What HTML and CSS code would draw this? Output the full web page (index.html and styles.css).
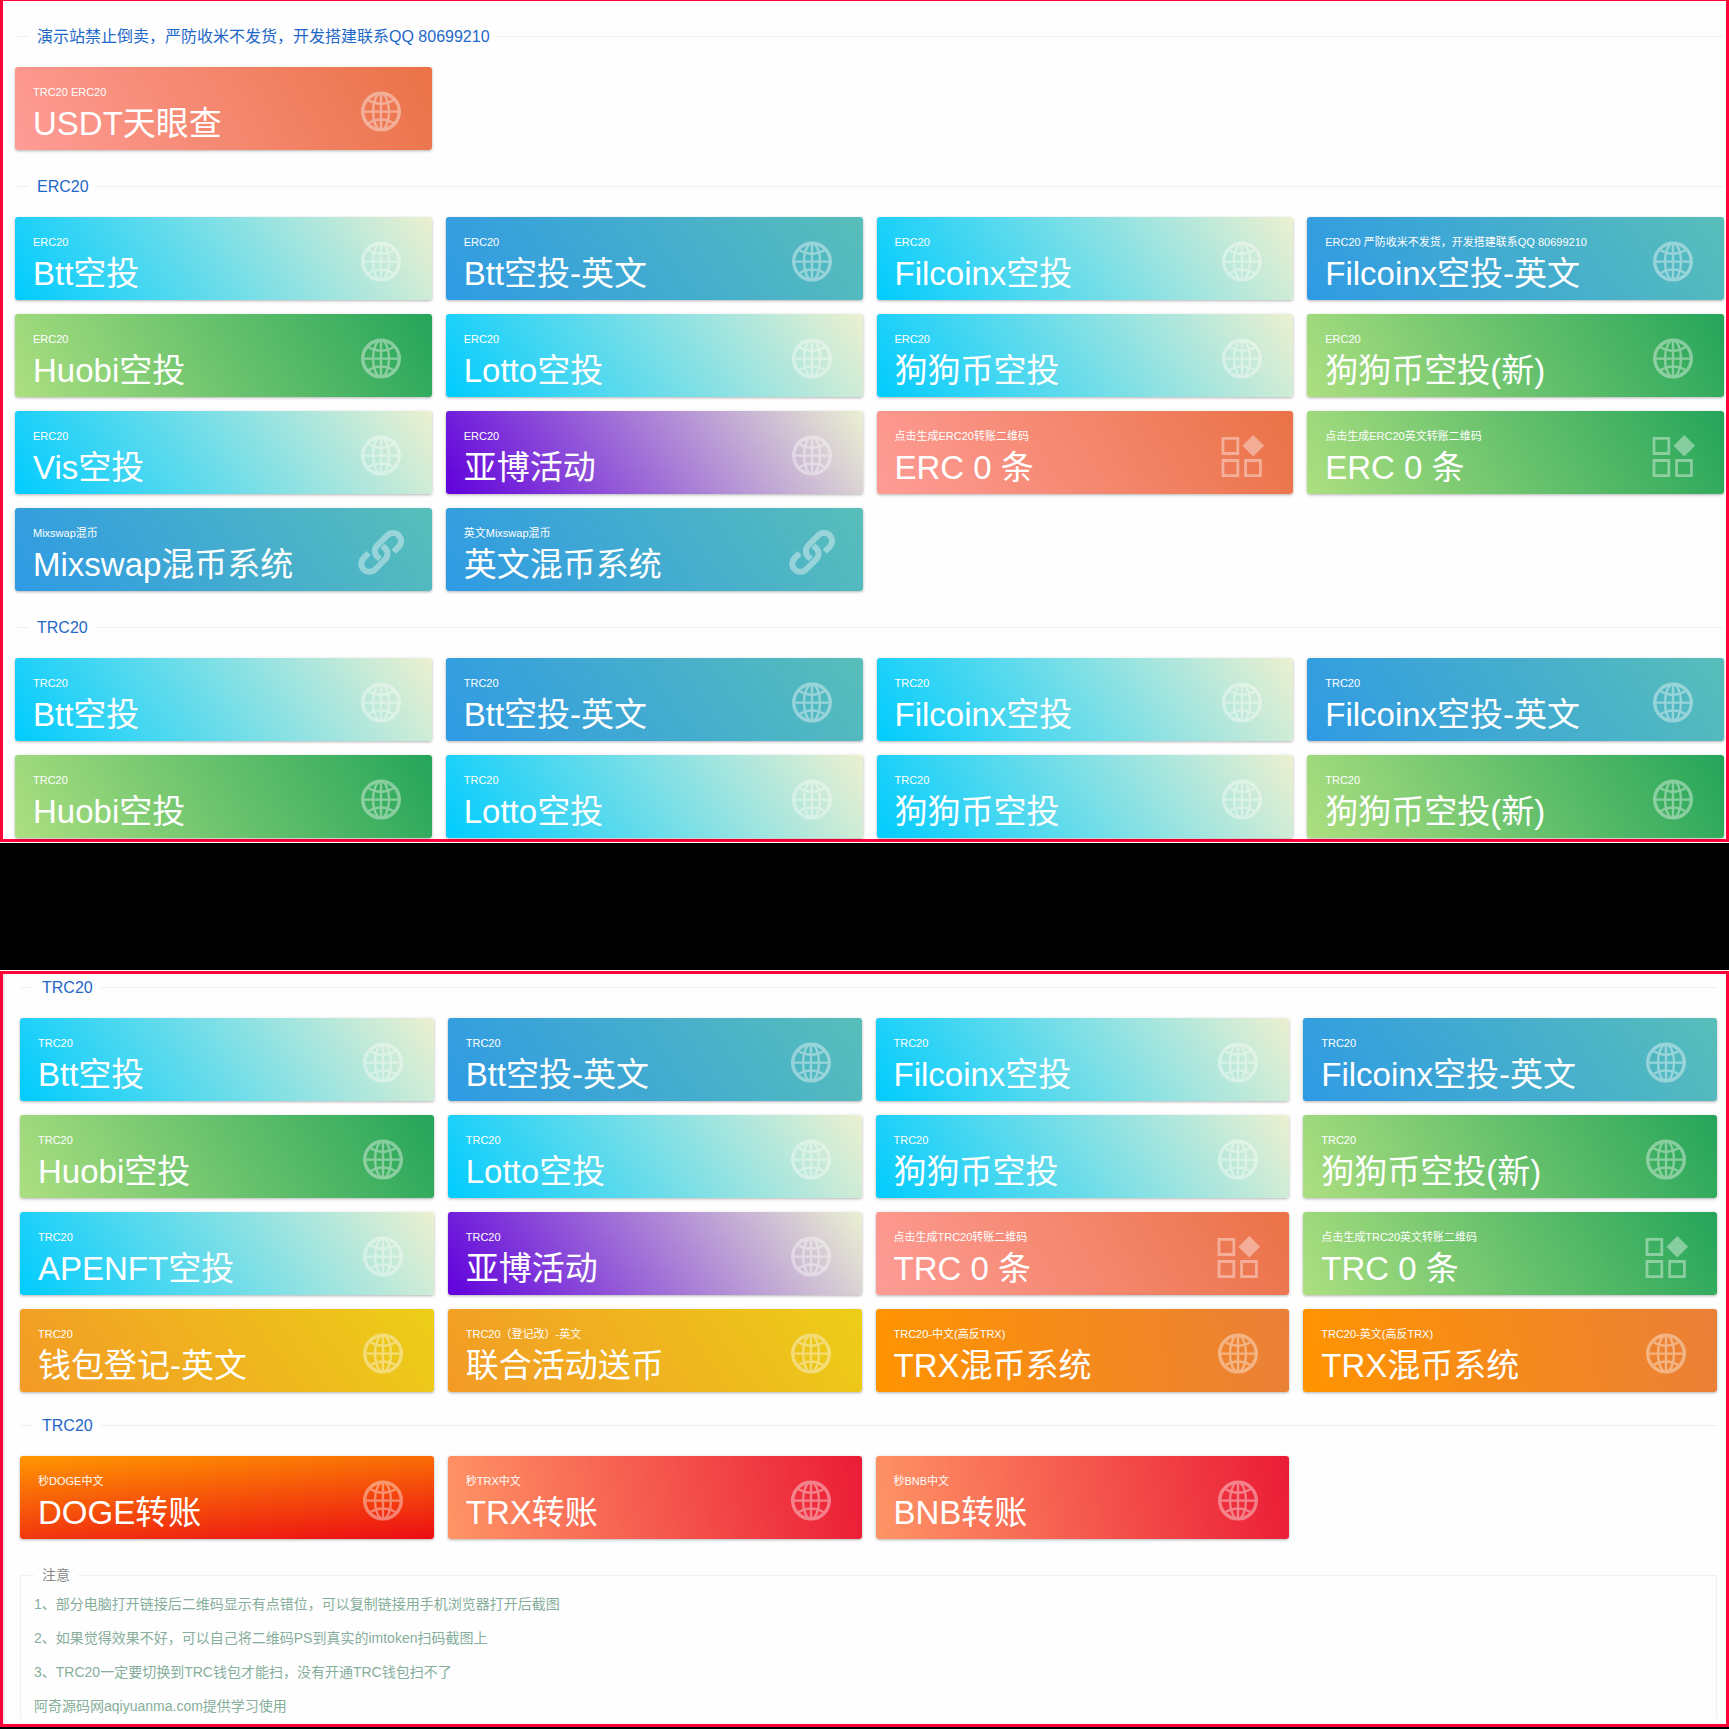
FILE: index.html
```html
<!DOCTYPE html>
<html lang="zh-CN">
<head>
    <meta charset="UTF-8">
    <meta name="viewport" content="width=device-width, initial-scale=1.0">
    <title>空投导航</title>
    <link rel="stylesheet" href="styles.css">
</head>
<body>
    <!-- icons shared by all cards -->
    <svg class="sprite" width="0" height="0" aria-hidden="true">
        <symbol id="globe" viewBox="0 0 48 48">
            <g fill="none" stroke="#fff" stroke-width="2.4">
                <circle cx="24" cy="23.6" r="18.3" stroke-width="3.4"/>
                <ellipse cx="24" cy="23.6" rx="8" ry="18.3"/>
                <path d="M24 5.3v36.6M5.7 23.6h36.6M10.5 11.5Q24 20 37.5 11.5M10.5 35.7Q24 27.2 37.5 35.7"/>
            </g>
        </symbol>
        <symbol id="widgets" viewBox="0 0 48 48">
            <g fill="none" stroke="#fff" stroke-width="2.8">
                <path d="M5 6.3h14.8v15.2H5zM5 28.5h14.8v15.2H5zM27.6 28.5h14.8v15.2H27.6z"/>
            </g>
            <path fill="#fff" d="M35.3 2.9L46.1 13.7 35.3 24.5 24.5 13.7z"/>
        </symbol>
        <symbol id="chain" viewBox="0 0 48 48">
            <g fill="none" stroke="#fff" stroke-width="6">
                <path d="M36.8 22.6L41.7 17.7A8 8 0 0 0 30.3 6.3L20.3 16.3A8 8 0 0 0 20.3 27.7L23 30"/>
                <path transform="rotate(180 24.2 23.4)" d="M36.8 22.6L41.7 17.7A8 8 0 0 0 30.3 6.3L20.3 16.3A8 8 0 0 0 20.3 27.7L23 30"/>
            </g>
        </symbol>
    </svg>

    <main class="panel panel-top">
        <h2>演示站禁止倒卖，严防收米不发货，开发搭建联系QQ 80699210</h2>
        <div class="cards">
            <a class="card coral" href="#"><span class="text"><small>TRC20 ERC20</small><b>USDT天眼查</b></span><svg class="icon"><use href="#globe"/></svg></a>
        </div>

        <h2>ERC20</h2>
        <div class="cards">
            <a class="card aqua" href="#"><span class="text"><small>ERC20</small><b>Btt空投</b></span><svg class="icon"><use href="#globe"/></svg></a>
            <a class="card blue" href="#"><span class="text"><small>ERC20</small><b>Btt空投-英文</b></span><svg class="icon"><use href="#globe"/></svg></a>
            <a class="card aqua" href="#"><span class="text"><small>ERC20</small><b>Filcoinx空投</b></span><svg class="icon"><use href="#globe"/></svg></a>
            <a class="card blue" href="#"><span class="text"><small>ERC20 严防收米不发货，开发搭建联系QQ 80699210</small><b>Filcoinx空投-英文</b></span><svg class="icon"><use href="#globe"/></svg></a>
            <a class="card green" href="#"><span class="text"><small>ERC20</small><b>Huobi空投</b></span><svg class="icon"><use href="#globe"/></svg></a>
            <a class="card aqua" href="#"><span class="text"><small>ERC20</small><b>Lotto空投</b></span><svg class="icon"><use href="#globe"/></svg></a>
            <a class="card aqua" href="#"><span class="text"><small>ERC20</small><b>狗狗币空投</b></span><svg class="icon"><use href="#globe"/></svg></a>
            <a class="card green" href="#"><span class="text"><small>ERC20</small><b>狗狗币空投(新)</b></span><svg class="icon"><use href="#globe"/></svg></a>
            <a class="card aqua" href="#"><span class="text"><small>ERC20</small><b>Vis空投</b></span><svg class="icon"><use href="#globe"/></svg></a>
            <a class="card purple" href="#"><span class="text"><small>ERC20</small><b>亚博活动</b></span><svg class="icon"><use href="#globe"/></svg></a>
            <a class="card coral" href="#"><span class="text"><small>点击生成ERC20转账二维码</small><b>ERC 0 条</b></span><svg class="icon"><use href="#widgets"/></svg></a>
            <a class="card green" href="#"><span class="text"><small>点击生成ERC20英文转账二维码</small><b>ERC 0 条</b></span><svg class="icon"><use href="#widgets"/></svg></a>
            <a class="card blue" href="#"><span class="text"><small>Mixswap混币</small><b>Mixswap混币系统</b></span><svg class="icon"><use href="#chain"/></svg></a>
            <a class="card blue" href="#"><span class="text"><small>英文Mixswap混币</small><b>英文混币系统</b></span><svg class="icon"><use href="#chain"/></svg></a>
        </div>

        <h2>TRC20</h2>
        <div class="cards">
            <a class="card aqua" href="#"><span class="text"><small>TRC20</small><b>Btt空投</b></span><svg class="icon"><use href="#globe"/></svg></a>
            <a class="card blue" href="#"><span class="text"><small>TRC20</small><b>Btt空投-英文</b></span><svg class="icon"><use href="#globe"/></svg></a>
            <a class="card aqua" href="#"><span class="text"><small>TRC20</small><b>Filcoinx空投</b></span><svg class="icon"><use href="#globe"/></svg></a>
            <a class="card blue" href="#"><span class="text"><small>TRC20</small><b>Filcoinx空投-英文</b></span><svg class="icon"><use href="#globe"/></svg></a>
            <a class="card green" href="#"><span class="text"><small>TRC20</small><b>Huobi空投</b></span><svg class="icon"><use href="#globe"/></svg></a>
            <a class="card aqua" href="#"><span class="text"><small>TRC20</small><b>Lotto空投</b></span><svg class="icon"><use href="#globe"/></svg></a>
            <a class="card aqua" href="#"><span class="text"><small>TRC20</small><b>狗狗币空投</b></span><svg class="icon"><use href="#globe"/></svg></a>
            <a class="card green" href="#"><span class="text"><small>TRC20</small><b>狗狗币空投(新)</b></span><svg class="icon"><use href="#globe"/></svg></a>
        </div>
    </main>

    <section class="panel panel-bottom">
        <div class="inner">
            <h2>TRC20</h2>
            <div class="cards">
                <a class="card aqua" href="#"><span class="text"><small>TRC20</small><b>Btt空投</b></span><svg class="icon"><use href="#globe"/></svg></a>
                <a class="card blue" href="#"><span class="text"><small>TRC20</small><b>Btt空投-英文</b></span><svg class="icon"><use href="#globe"/></svg></a>
                <a class="card aqua" href="#"><span class="text"><small>TRC20</small><b>Filcoinx空投</b></span><svg class="icon"><use href="#globe"/></svg></a>
                <a class="card blue" href="#"><span class="text"><small>TRC20</small><b>Filcoinx空投-英文</b></span><svg class="icon"><use href="#globe"/></svg></a>
                <a class="card green" href="#"><span class="text"><small>TRC20</small><b>Huobi空投</b></span><svg class="icon"><use href="#globe"/></svg></a>
                <a class="card aqua" href="#"><span class="text"><small>TRC20</small><b>Lotto空投</b></span><svg class="icon"><use href="#globe"/></svg></a>
                <a class="card aqua" href="#"><span class="text"><small>TRC20</small><b>狗狗币空投</b></span><svg class="icon"><use href="#globe"/></svg></a>
                <a class="card green" href="#"><span class="text"><small>TRC20</small><b>狗狗币空投(新)</b></span><svg class="icon"><use href="#globe"/></svg></a>
                <a class="card aqua" href="#"><span class="text"><small>TRC20</small><b>APENFT空投</b></span><svg class="icon"><use href="#globe"/></svg></a>
                <a class="card purple" href="#"><span class="text"><small>TRC20</small><b>亚博活动</b></span><svg class="icon"><use href="#globe"/></svg></a>
                <a class="card coral" href="#"><span class="text"><small>点击生成TRC20转账二维码</small><b>TRC 0 条</b></span><svg class="icon"><use href="#widgets"/></svg></a>
                <a class="card green" href="#"><span class="text"><small>点击生成TRC20英文转账二维码</small><b>TRC 0 条</b></span><svg class="icon"><use href="#widgets"/></svg></a>
                <a class="card yellow" href="#"><span class="text"><small>TRC20</small><b>钱包登记-英文</b></span><svg class="icon"><use href="#globe"/></svg></a>
                <a class="card yellow" href="#"><span class="text"><small>TRC20（登记改）-英文</small><b>联合活动送币</b></span><svg class="icon"><use href="#globe"/></svg></a>
                <a class="card orange" href="#"><span class="text"><small>TRC20-中文(高反TRX)</small><b>TRX混币系统</b></span><svg class="icon"><use href="#globe"/></svg></a>
                <a class="card orange" href="#"><span class="text"><small>TRC20-英文(高反TRX)</small><b>TRX混币系统</b></span><svg class="icon"><use href="#globe"/></svg></a>
            </div>

            <h2>TRC20</h2>
            <div class="cards">
                <a class="card fire" href="#"><span class="text"><small>秒DOGE中文</small><b>DOGE转账</b></span><svg class="icon"><use href="#globe"/></svg></a>
                <a class="card red" href="#"><span class="text"><small>秒TRX中文</small><b>TRX转账</b></span><svg class="icon"><use href="#globe"/></svg></a>
                <a class="card red" href="#"><span class="text"><small>秒BNB中文</small><b>BNB转账</b></span><svg class="icon"><use href="#globe"/></svg></a>
            </div>

            <fieldset class="note">
                <legend>注意</legend>
                <p>1、部分电脑打开链接后二维码显示有点错位，可以复制链接用手机浏览器打开后截图</p>
                <p>2、如果觉得效果不好，可以自己将二维码PS到真实的imtoken扫码截图上</p>
                <p>3、TRC20一定要切换到TRC钱包才能扫，没有开通TRC钱包扫不了</p>
                <p>阿奇源码网aqiyuanma.com提供学习使用</p>
            </fieldset>
        </div>
    </section>
</body>
</html>
```

FILE: styles.css
```css
* {
    box-sizing: border-box;
}
body {
    margin: 0;
    background-color: #000000;
    font-family: "Liberation Sans", "Noto Sans CJK SC", sans-serif;
}
.sprite {
    display: block;
}
.panel {
    background-color: #fefefe;
    border: 3px solid #ff0039;
}
.panel-top {
    border-top-width: 1px;
    padding: 23px 2px 1px 12px;
    box-shadow: 0 1px #ffffff;
}
.panel-bottom {
    margin-top: 129px;
    box-shadow: 0 -1px #ffffff, 0 3px #ffffff;
}
.inner {
    border-left: 2px solid #ebebeb;
    padding: 1px 9px 6px 15px;
}

/* section title sitting on a thin line */
h2 {
    display: flex;
    align-items: center;
    gap: 8px;
    margin: 24px 0 18px;
    font-size: 16px;
    font-weight: normal;
    line-height: 25px;
    color: #1f68c8;
}
h2:first-child {
    margin-top: 0;
}
h2::before,
h2::after {
    content: "";
    width: 14px;
    height: 1px;
    background-color: #f0f0f0;
}
h2::after {
    flex: 1;
}
.panel-bottom .cards + h2 {
    margin-top: 21px;
}

.cards {
    display: grid;
    grid-template-columns: repeat(4, 1fr);
    gap: 14px;
}
.card {
    display: flex;
    align-items: center;
    justify-content: space-between;
    min-height: 83px;
    padding: 7px 27px 0 18px;
    border-radius: 3px;
    box-shadow: 0 1px 3px rgba(0, 0, 0, 0.3);
    color: #ffffff;
    text-decoration: none;
}
.text {
    margin-top: 8px;
    white-space: nowrap;
}
.card small {
    display: block;
    font-size: 11px;
    line-height: 16px;
}
.card b {
    display: block;
    font-size: 33px;
    font-weight: normal;
    line-height: 48px;
}
.icon {
    width: 48px;
    height: 48px;
    opacity: 0.4;
}

.aqua { background: linear-gradient(55deg, #00ccff, #ecf0d0); }
.blue { background: linear-gradient(55deg, #2f9ae4, #58beba); }
.green { background: linear-gradient(60deg, #acdf80, #25a55a); }
.coral { background: linear-gradient(60deg, #fe9c96, #ea7246); }
.purple { background: linear-gradient(55deg, #6000dc, #ebf0d2); }
.yellow { background: linear-gradient(55deg, #f39a26, #ecce18); }
.orange { background: linear-gradient(80deg, #ff9400, #ea8038); }
.fire { background: linear-gradient(175deg, #ff9700, #ec0c14); }
.red { background: linear-gradient(80deg, #ff9566, #eb1c36); }

.note {
    margin: 24px 0 0;
    padding: 4px 13px 0;
    border: 1px solid #f0f0f0;
    border-bottom: 0;
    font-size: 14px;
    color: #86ae9b;
}
.note legend {
    padding: 0 8px;
    line-height: 25px;
    color: #888888;
}
.note p {
    margin: 0 0 10px;
    line-height: 24px;
}
.note p:last-child {
    margin-bottom: 0;
}
```
